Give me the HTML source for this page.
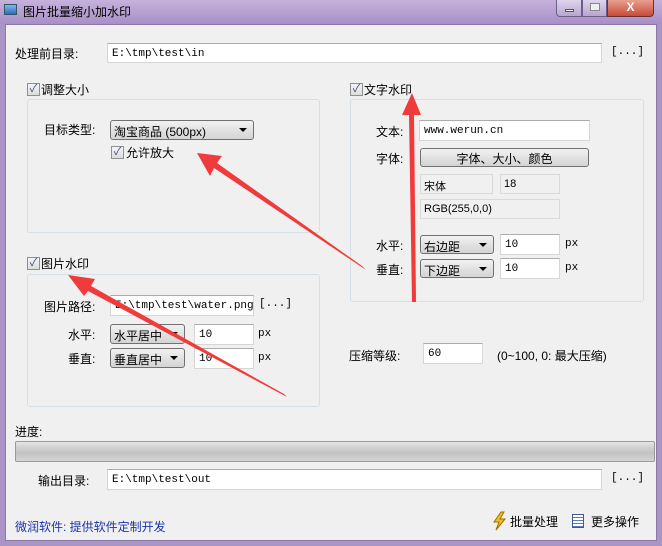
<!DOCTYPE html>
<html><head><meta charset="utf-8"><style>
*{box-sizing:border-box}
body{margin:0;width:662px;height:546px;overflow:hidden;background:#a996c6;font-family:"Liberation Sans","Noto Sans CJK SC",sans-serif;font-size:12px;color:#000;position:relative}
.a{position:absolute;white-space:nowrap}
.title{left:0;top:0;width:662px;height:24px;background:linear-gradient(#c6b2dc,#a88fc6)}
.client{left:5px;top:24px;width:652px;height:517px;background:#f0f0f0;border:1px solid #8a78a6}
.in{position:absolute;background:#fff;border:1px solid #d6d6d6;border-top-color:#acacac;font-family:"Liberation Mono","Noto Sans CJK SC",monospace;font-size:11px;padding:4px 4px 0;white-space:nowrap}
.ro{position:absolute;background:#f0f0f0;border:1px solid #d9d9d9;font-size:11px;padding:3px 3px 0;white-space:nowrap}
.sel,.btn{position:absolute;border:1px solid #707070;border-radius:3px;background:linear-gradient(#f2f2f2,#e2e2e2 50%,#d4d4d4);padding:2px 3px 0;font-size:12px;white-space:nowrap}
.sel:after{content:"";position:absolute;right:6px;top:7px;border:4px solid transparent;border-top:4px solid #000}
.grp{position:absolute;border:1px solid #d5dfe5;border-radius:3px}
.cb{position:absolute;width:13px;height:13px;border:1px solid #8f8f8f;background:linear-gradient(#f4f4f4,#dcdcdc);font-size:11px;line-height:11px;text-align:center;color:#3c4f8d}
.br{position:absolute;font-family:"Liberation Mono",monospace;font-size:11px}
</style></head><body>
<div class="a title"></div>
<div class="a" style="left:4px;top:4px;width:13px;height:11px;background:linear-gradient(#7ab8ee,#2d6fc0);border:1px solid #356"></div>
<div class="a" style="left:23px;top:3px;font-size:12px">图片批量缩小加水印</div>
<div class="a" style="left:556px;top:0;width:26px;height:17px;border:1px solid #6d5e8c;border-top:none;border-radius:0 0 0 4px;background:linear-gradient(#ded4ec,#b7a6d0)"><div style="position:absolute;left:8px;top:9px;width:9px;height:3px;background:#fff;border:1px solid #555"></div></div>
<div class="a" style="left:582px;top:0;width:25px;height:17px;border:1px solid #6d5e8c;border-top:none;background:linear-gradient(#ded4ec,#b7a6d0)"><div style="position:absolute;left:7px;top:3px;width:10px;height:8px;border:1px solid #888;background:#eee"></div></div>
<div class="a" style="left:607px;top:0;width:47px;height:17px;border:1px solid #6d3030;border-top:none;border-radius:0 0 4px 0;background:linear-gradient(#e8a090,#c74a36);color:#fff;font-weight:bold;text-align:center;font-size:12px;line-height:15px">X</div>
<div class="a client"></div>

<div class="a" style="left:15px;top:45px">处理前目录:</div>
<div class="in" style="left:107px;top:43px;width:495px;height:20px">E:\tmp\test\in</div>
<div class="br" style="left:611px;top:46px">[...]</div>

<div class="cb" style="left:27px;top:83px">✓</div><div class="a" style="left:41px;top:81px">调整大小</div>
<div class="grp" style="left:27px;top:99px;width:293px;height:134px"></div>
<div class="a" style="left:44px;top:121px">目标类型:</div>
<div class="sel" style="left:110px;top:120px;width:144px;height:20px">淘宝商品 (500px)</div>
<div class="cb" style="left:111px;top:146px">✓</div><div class="a" style="left:126px;top:144px">允许放大</div>

<div class="cb" style="left:27px;top:257px">✓</div><div class="a" style="left:41px;top:255px">图片水印</div>
<div class="grp" style="left:27px;top:274px;width:293px;height:133px"></div>
<div class="a" style="left:44px;top:298px">图片路径:</div>
<div class="in" style="left:110px;top:295px;width:144px;height:21px">E:\tmp\test\water.png</div>
<div class="br" style="left:259px;top:298px">[...]</div>
<div class="a" style="left:68px;top:326px">水平:</div>
<div class="sel" style="left:110px;top:324px;width:75px;height:20px">水平居中</div>
<div class="in" style="left:194px;top:324px;width:60px;height:21px">10</div>
<div class="br" style="left:258px;top:328px">px</div>
<div class="a" style="left:68px;top:350px">垂直:</div>
<div class="sel" style="left:110px;top:348px;width:75px;height:20px">垂直居中</div>
<div class="in" style="left:194px;top:348px;width:60px;height:21px">10</div>
<div class="br" style="left:258px;top:352px">px</div>

<div class="cb" style="left:350px;top:83px">✓</div><div class="a" style="left:364px;top:81px">文字水印</div>
<div class="grp" style="left:350px;top:99px;width:294px;height:203px"></div>
<div class="a" style="left:376px;top:123px">文本:</div>
<div class="in" style="left:419px;top:120px;width:171px;height:21px">www.werun.cn</div>
<div class="a" style="left:376px;top:150px">字体:</div>
<div class="btn" style="left:420px;top:148px;width:169px;height:19px;text-align:center;padding:1px 0 0">字体、大小、颜色</div>
<div class="ro" style="left:420px;top:174px;width:73px;height:20px">宋体</div>
<div class="ro" style="left:500px;top:174px;width:60px;height:20px">18</div>
<div class="ro" style="left:420px;top:199px;width:140px;height:20px">RGB(255,0,0)</div>
<div class="a" style="left:376px;top:237px">水平:</div>
<div class="sel" style="left:420px;top:235px;width:74px;height:19px">右边距</div>
<div class="in" style="left:500px;top:234px;width:60px;height:21px">10</div>
<div class="br" style="left:565px;top:238px">px</div>
<div class="a" style="left:376px;top:261px">垂直:</div>
<div class="sel" style="left:420px;top:259px;width:74px;height:19px">下边距</div>
<div class="in" style="left:500px;top:258px;width:60px;height:21px">10</div>
<div class="br" style="left:565px;top:262px">px</div>

<div class="a" style="left:349px;top:347px">压缩等级:</div>
<div class="in" style="left:423px;top:343px;width:60px;height:21px">60</div>
<div class="a" style="left:497px;top:347px">(0~100, 0: 最大压缩)</div>

<div class="a" style="left:15px;top:423px">进度:</div>
<div class="a" style="left:15px;top:441px;width:640px;height:21px;border:1px solid #9a9a9a;border-radius:2px;background:linear-gradient(#e6e6e6,#d0d0d0 30%,#c2c2c2 60%,#d6d6d6)"></div>
<div class="a" style="left:38px;top:472px">输出目录:</div>
<div class="in" style="left:107px;top:469px;width:495px;height:21px">E:\tmp\test\out</div>
<div class="br" style="left:611px;top:472px">[...]</div>

<div class="a" style="left:15px;top:518px;color:#1c34a8">微润软件: 提供软件定制开发</div>
<svg class="a" style="left:491px;top:511px" width="16" height="20"><path d="M10 1L3 11h5l-3 8 9-11H9l4-7z" fill="#f2c21a" stroke="#a06a00" stroke-width="1"/></svg>
<div class="a" style="left:510px;top:513px">批量处理</div>
<div class="a" style="left:572px;top:514px;width:12px;height:14px;border:1px solid #3b5a94;background:repeating-linear-gradient(#fff 0 2px,#5a7ab8 2px 3px)"></div>
<div class="a" style="left:591px;top:513px">更多操作</div>

<svg class="a" style="left:0;top:0" width="662" height="546">
<g fill="#ef3b3b">
<polygon points="366,270 362,266 217,163 222,156 197,153 210,176 214,168"/>
<polygon points="287,397 284,394 91,286 95,279 68,275 84,296 88,291"/>
<polygon points="416,302 412,302 409,115 402,115 412,93 421,115 414,115"/>
</g>
</svg>
</body></html>
